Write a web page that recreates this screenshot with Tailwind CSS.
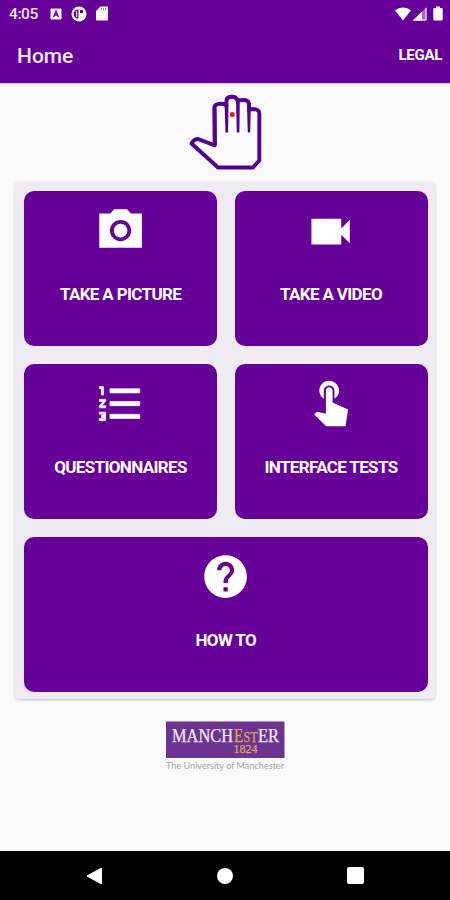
<!DOCTYPE html>
<html lang="en">
<head>
    <meta charset="UTF-8">
    <meta name="viewport" content="width=device-width, initial-scale=1.0">
    <title>Home</title>
    <script src="https://cdn.jsdelivr.net/npm/@tailwindcss/browser@4"></script>
</head>
<body class="w-[450px] h-[900px] flex flex-col overflow-hidden bg-[#fafafa] font-['Roboto',sans-serif] text-white">
    <!-- Status Bar + App Bar -->
    <header class="h-[83px] shrink-0 bg-[#660099] shadow-[0_1px_1px_rgba(102,0,153,0.2)]">
        <div class="h-[27px] flex items-center pl-[9px] pr-[7px]">
            <span class="w-[41px] pt-px text-[15.5px] leading-[27px] font-medium tracking-[-0.4px] text-[#f3e6fa]">4:05</span>
            <svg class="w-3 h-3" viewBox="0 0 12 12">
                <rect x="0.5" y="0.5" width="11" height="11" rx="1" fill="#f6ecfb"/>
                <path d="M3.600 9 6 3.200 8.400 9M4.500 7h3" fill="none" stroke="#660099" stroke-width="1.300"/>
            </svg>
            <svg class="w-4 h-4 ml-[9px]" viewBox="0 0 16 16">
                <circle cx="8" cy="8" r="7.500" fill="#fff"/>
                <path d="M7.500 3.500H6A4.700 4.700 0 0 0 6 12.500h1.500z" fill="#660099"/>
                <path d="M5.700 5v6" stroke="#fff" stroke-width="1"/>
                <path d="M9 4h3v3H9z" fill="#660099"/>
            </svg>
            <svg class="w-3 h-[15px] ml-[9px]" viewBox="0 0 12 15">
                <path d="M4.500.5h6.500a1 1 0 0 1 1 1v12a1 1 0 0 1-1 1H1a1 1 0 0 1-1-1V5z" fill="#fff"/>
                <path d="M5.500 2v2.500M7.500 2v2.500M9.500 2v2.500" stroke="#b98ad0" stroke-width="1"/>
            </svg>
            <svg class="w-4 h-[14px] ml-auto" viewBox="0 0 16 14">
                <path d="M0 3.500C4.500-.6 11.500-.6 16 3.500L8 13.500z" fill="#fff"/>
            </svg>
            <svg class="w-[14px] h-[14px] ml-0.5" viewBox="0 0 14 14">
                <path d="M13.500 0v13.500H0z" fill="#a968c4"/>
                <path d="M9 4.500v9H0z" fill="#fff"/>
                <path d="M13 1v12H0.500" fill="none" stroke="#fff" stroke-width="1"/>
            </svg>
            <svg class="w-[10px] h-[15px] ml-[6px]" viewBox="0 0 10 15">
                <path d="M3 0.500h4V2h1.500A1.200 1.200 0 0 1 9.700 3.200v10A1.200 1.200 0 0 1 8.500 14.400h-7A1.200 1.200 0 0 1 .3 13.200v-10A1.200 1.200 0 0 1 1.500 2H3z" fill="#fff"/>
            </svg>
        </div>
        <div class="h-[56px] flex items-center justify-between pl-[17px] pr-[8px]">
            <h1 class="pt-[3px] text-[21px] font-medium text-[#f3e6fa]">Home</h1>
            <span class="text-[15px] font-bold tracking-[-0.3px]">LEGAL</span>
        </div>
    </header>

    <!-- Content -->
    <main class="flex-1 flex flex-col items-center">
        <svg class="mt-[5px] w-[90px] h-[90px] shrink-0" viewBox="0 0 90 90">
            <path d="M34.800 57.300L34.300 19.500Q35 16 40.500 15.800T46.500 18V12q.5-3.300 5.400-3.300T57.500 13q1-1 5.800-1T69 15.500v6.500q1-1 4.800-1 5.500.6 5.500 4.500v47L73 79.500H38L11.500 55.500Q14 51 18 51z" fill="#fcfcfd" stroke="#550094" stroke-width="3.900" stroke-linejoin="round"/>
            <path d="M44.600 17h3.800l-.3 27.500h-2.600zM56 13h3.800l-.4 31.500h-2.600zM67 18h3.800l-.6 26.500h-2.400zM33 20h3.600l.2 37-4-1z" fill="#550094"/>
            <circle cx="52.300" cy="26.500" r="2.500" fill="#f5101c"/>
        </svg>

        <!-- Menu -->
        <div class="mt-[4px] w-[420px] h-[517px] shrink-0 rounded-[4px] bg-[#eeecf2] px-[9px] pt-[9px] shadow-[0_1px_3px_rgba(0,0,0,0.22)]">
            <div class="grid grid-cols-[193px_193px] grid-rows-[155px_155px_155px] gap-x-[17.5px] gap-y-[18px]">
                <button class="flex flex-col items-center rounded-[10px] bg-[#660099] pt-[14px]">
                    <svg class="w-[51.200px] h-[51.200px]" viewBox="0 0 24 24" fill="#fff">
                        <circle cx="12" cy="12" r="3.200"/>
                        <path d="M16.830 4 15 2H9L7.170 4H2v16h20V4h-5.170zM12 17c-2.760 0-5-2.240-5-5s2.240-5 5-5 5 2.240 5 5-2.240 5-5 5z"/>
                    </svg>
                    <span class="mt-[28px] text-[17px] leading-5 font-bold tracking-[-0.65px] whitespace-nowrap">TAKE A PICTURE</span>
                </button>
                <button class="flex flex-col items-center rounded-[10px] bg-[#660099] pt-[14.5px]">
                    <svg class="w-[51.200px] h-[51.200px]" viewBox="0 0 24 24" fill="#fff">
                        <path d="M17 10.500V6H3v12h14v-4.500l4 4v-11l-4 4z"/>
                    </svg>
                    <span class="mt-[27.5px] text-[17px] leading-5 font-bold tracking-[-0.65px] whitespace-nowrap">TAKE A VIDEO</span>
                </button>
                <button class="flex flex-col items-center rounded-[10px] bg-[#660099] pt-[14px]">
                    <svg class="w-[51.200px] h-[51.200px]" viewBox="0 0 24 24" fill="#fff">
                        <path stroke="#fff" stroke-width="0.300" d="M2 17h2v.5H3v1h1v.5H2v1h3v-4H2v1zm1-9h1V4H2v1h1v3zm-1 3h1.800L2 13.100v.9h3v-1H3.200L5 10.900V10H2v1zm5-6v2h14V5H7zm0 14h14v-2H7v2zm0-6h14v-2H7v2z"/>
                    </svg>
                    <span class="mt-[28px] text-[17px] leading-5 font-bold tracking-[-0.65px] whitespace-nowrap">QUESTIONNAIRES</span>
                </button>
                <button class="flex flex-col items-center rounded-[10px] bg-[#660099] pt-[14.5px]">
                    <svg class="w-[51.200px] h-[51.200px]" viewBox="0 0 24 24" fill="#fff">
                        <path d="M8.800 9.240V5.500C8.800 4.120 9.920 3 11.300 3s2.500 1.120 2.500 2.500v3.740c1.210-.81 2.200-2.180 2.200-3.740C16 3.010 13.890.8 11.300.8S6.700 3.010 6.700 5.500c0 1.560.89 2.930 2.100 3.740z"/>
                        <path d="M12.900 11V5.500c0-.83-.77-1.600-1.600-1.600s-1.500.77-1.500 1.600v10.740L5.550 15.350 4.300 16.610 9.900 22.200h9.100L20.200 14.300z"/>
                    </svg>
                    <span class="mt-[27.5px] text-[17px] leading-5 font-bold tracking-[-0.65px] whitespace-nowrap">INTERFACE TESTS</span>
                </button>
                <button class="col-span-2 flex flex-col items-center rounded-[10px] bg-[#660099] pt-[14px]">
                    <svg class="w-[51.200px] h-[51.200px]" viewBox="0 0 24 24" fill="#fff">
                        <path d="M12 2C6.480 2 2 6.480 2 12s4.480 10 10 10 10-4.480 10-10S17.520 2 12 2zm1 17h-2v-2h2v2zm2.070-7.750-.9.920C13.450 12.900 13 13.500 13 15h-2v-.5c0-1.100.45-2.100 1.170-2.830l1.240-1.260c.37-.36.59-.86.59-1.410 0-1.100-.9-2-2-2s-2 .9-2 2H8c0-2.210 1.790-4 4-4s4 1.790 4 4c0 .88-.36 1.680-.93 2.250z"/>
                    </svg>
                    <span class="mt-[28px] text-[17px] leading-5 font-bold tracking-[-0.65px] whitespace-nowrap">HOW TO</span>
                </button>
            </div>
        </div>

        <!-- University logo -->
        <svg class="mt-[22px] w-[122px] h-[56px] shrink-0 overflow-visible" viewBox="-1 0 122 56">
            <rect x="1" y="0.500" width="118.500" height="36.500" fill="#6c3391"/>
            <g font-family="'Liberation Serif', serif" fill="#f4eaf8" stroke="#f4eaf8" stroke-width="0.250">
                <text x="7" y="21" font-size="18" textLength="61" lengthAdjust="spacingAndGlyphs">MANCH</text>
                <text x="69" y="21" font-size="18" fill="#e0a95a" stroke="#e0a95a" textLength="9" lengthAdjust="spacingAndGlyphs">E</text>
                <text x="78.500" y="21" font-size="14.500" fill="#e0a95a" stroke="#e0a95a" textLength="14" lengthAdjust="spacingAndGlyphs">ST</text>
                <text x="93" y="21" font-size="18" textLength="21" lengthAdjust="spacingAndGlyphs">ER</text>
                <text x="68.500" y="32" font-size="13" fill="#e0a95a" stroke="#e0a95a" textLength="24" lengthAdjust="spacingAndGlyphs">1824</text>
            </g>
            <text x="1" y="48" font-family="Lato, sans-serif" font-size="9.500" fill="#a5a5a5" textLength="118" lengthAdjust="spacingAndGlyphs">The University of Manchester</text>
        </svg>
    </main>

    <!-- Navigation Bar -->
    <nav class="h-[49px] shrink-0 bg-black flex items-center justify-between pl-[86px] pr-[86px]">
        <svg class="w-[17px] h-[18px]" viewBox="0 0 17 18">
            <path d="M15.500 1v16L1 9z" fill="#fff" stroke="#fff" stroke-width="1" stroke-linejoin="round"/>
        </svg>
        <div class="w-4 h-4 rounded-full bg-white"></div>
        <div class="w-[17px] h-[17px] rounded-[2px] bg-white"></div>
    </nav>
</body>
</html>
